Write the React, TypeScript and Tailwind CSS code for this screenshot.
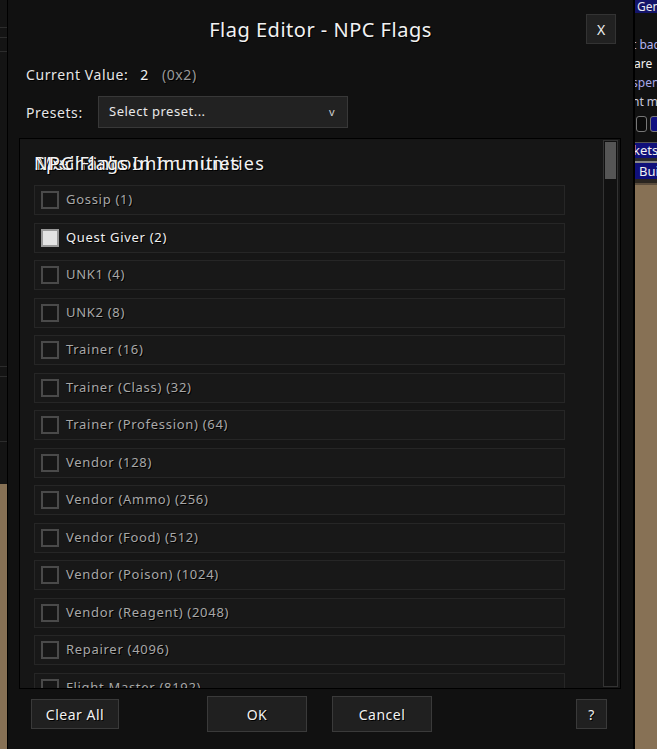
import type { ReactNode } from "react";

const flags = [
  { name: "Gossip", value: 1 },
  { name: "Quest Giver", value: 2 },
  { name: "UNK1", value: 4 },
  { name: "UNK2", value: 8 },
  { name: "Trainer", value: 16 },
  { name: "Trainer (Class)", value: 32 },
  { name: "Trainer (Profession)", value: 64 },
  { name: "Vendor", value: 128 },
  { name: "Vendor (Ammo)", value: 256 },
  { name: "Vendor (Food)", value: 512 },
  { name: "Vendor (Poison)", value: 1024 },
  { name: "Vendor (Reagent)", value: 2048 },
  { name: "Repairer", value: 4096 },
  { name: "Flight Master", value: 8192 },
];

const currentValue = 2;

function FlagRow({ name, value }: { name: string; value: number }) {
  const checked = (currentValue & value) !== 0;
  return (
    <div className="flex h-[30px] shrink-0 items-center gap-[7px] border border-[#262626] bg-[#181818] pl-[6px]">
      <div
        className={
          checked
            ? "h-[18px] w-[18px] border-2 border-[#9a9a9a] bg-[#e4e4e4]"
            : "h-[18px] w-[18px] border-2 border-[#4a4a4a] bg-[#161616]"
        }
      />
      <span
        className={
          checked
            ? "text-[13px] tracking-[0.7px] text-[#f0f0f0] [text-shadow:1px_1px_0_#000]"
            : "text-[13px] tracking-[0.7px] text-[#a8a8a8] [text-shadow:1px_1px_0_#000]"
        }
      >
        {name} ({value})
      </span>
    </div>
  );
}

function Btn({ children, className }: { children: ReactNode; className: string }) {
  return (
    <button
      type="button"
      className={`flex items-center justify-center border border-[#3a3a3a] bg-[#202020] text-[14px] tracking-[0.5px] text-[#f2f2f2] [text-shadow:1px_1px_0_#000] ${className}`}
    >
      {children}
    </button>
  );
}

function LeftStrip() {
  return (
    <div className="flex h-full w-[7px] shrink-0 flex-col bg-[#141414]">
      <div className="h-[27px]" />
      <div className="h-px bg-[#2c2c2c]" />
      <div className="h-[9px]" />
      <div className="h-px bg-[#2c2c2c]" />
      <div className="h-[13px]" />
      <div className="h-px bg-[#2c2c2c]" />
      <div className="h-[314px]" />
      <div className="h-px bg-[#2c2c2c]" />
      <div className="h-[9px]" />
      <div className="h-px bg-[#2c2c2c]" />
      <div className="h-[64px]" />
      <div className="h-px bg-[#2c2c2c]" />
      <div className="h-[42px]" />
      <div className="flex-1 bg-[#877155]" />
    </div>
  );
}

function RightStrip() {
  return (
    <div className="flex h-full w-[24px] shrink-0 flex-col overflow-hidden border-l-2 border-black bg-[#111111] font-['Noto_Sans',sans-serif] text-[12px] leading-none">
      <div className="flex h-[13px] items-center whitespace-nowrap bg-[#14146a] pl-[2px] text-[12px] text-[#e8e8f0]">Gen</div>
      <div className="h-[26px]" />
      <div className="-ml-[3px] flex flex-col gap-[7px] whitespace-nowrap text-[12px]">
        <span className="text-[#b4b4f2]">t back</span>
        <span className="pl-[2px] text-[#f0f0f0]">are</span>
        <span className="text-[#a8a8ea]">spen</span>
        <span className="text-[#c8c8dc]">nt mo</span>
      </div>
      <div className="mt-[8px] flex gap-[3px] pl-[1px]">
        <div className="h-[16px] w-[11px] shrink-0 rounded-[3px] border border-[#777] bg-[#0a0a0a]" />
        <div className="h-[16px] w-[16px] shrink-0 rounded-[3px] border border-[#777] bg-[#101080]" />
      </div>
      <div className="mt-[10px] h-px bg-[#555]" />
      <div className="flex h-[15px] items-center whitespace-nowrap bg-[#10107a] text-[13px] text-[#f0f0f0]">
        <span className="-ml-[2px]">kets</span>
      </div>
      <div className="h-[3px] bg-[#2a2a2a]" />
      <div className="h-[2px] bg-[#888]" />
      <div className="flex h-[16px] items-center whitespace-nowrap bg-[#10107a] pl-[4px] text-[13px] text-[#f0f0f0]">Bui</div>
      <div className="h-[4px] bg-[#2a2520]" />
      <div className="h-[2px] bg-[#5a4c3c]" />
      <div className="flex-1 bg-[#877155]" />
    </div>
  );
}

export default function App() {
  return (
    <div className="flex h-[749px] w-[657px] overflow-hidden bg-[#111111] font-['Noto_Sans','Open_Sans',sans-serif]">
      <LeftStrip />
      <div className="flex h-full w-[626px] shrink-0 flex-col border-l border-black bg-[#111111]">
        <div className="relative flex h-[64px] items-start justify-center pt-[14px]">
          <h1 className="mt-[1px] text-[20px] leading-[30px] tracking-[0.5px] text-[#f2f2f2] [text-shadow:1px_1px_0_#000]">
            Flag Editor - NPC Flags
          </h1>
          <button
            type="button"
            className="absolute right-[17px] top-[14px] flex h-[30px] w-[30px] items-center justify-center border border-[#333] bg-[#212121] text-[14px] text-[#eee]"
          >
            X
          </button>
        </div>

        <div className="flex h-[20px] items-center pl-[18px] text-[14px] tracking-[0.6px] [text-shadow:1px_1px_0_#000]">
          <span className="text-[#e6e6e6]">Current Value:</span>
          <span className="ml-[12px] text-[#f2f2f2]">2</span>
          <span className="ml-[13px] text-[#9a9a9a]">(0x2)</span>
        </div>

        <div className="mt-[12px] flex items-center pl-[18px]">
          <span className="w-[72px] text-[14px] tracking-[0.6px] text-[#e6e6e6] [text-shadow:1px_1px_0_#000]">Presets:</span>
          <div className="flex h-[32px] w-[250px] items-center justify-between border border-[#383838] bg-[#222222] pl-[10px] pr-[12px] text-[13px] tracking-[0.5px] text-[#e8e8e8]">
            <span>Select preset...</span>
            <span className="text-[11px] text-[#cfcfcf]">v</span>
          </div>
        </div>

        <div className="ml-[11px] mt-[10px] flex h-[551px] w-[602px] overflow-hidden border border-black bg-[#161616]">
          <div className="flex flex-1 flex-col pl-[14px] pr-[38px]">
            <div className="relative h-[46px] shrink-0 text-[18px] tracking-[1.2px] text-[#f4f4f4] [text-shadow:1px_1px_0_#000]">
              <span className="absolute left-[1px] top-[11px] whitespace-nowrap">Spell School Immunities</span>
              <span className="absolute left-[2px] top-[11px] whitespace-nowrap">Mechanic Immunities</span>
              <span className="absolute left-0 top-[11px] whitespace-nowrap">NPC Flags</span>
            </div>
            <div className="flex flex-col gap-[7.5px]">
              {flags.map((f) => (
                <FlagRow key={f.value} name={f.name} value={f.value} />
              ))}
            </div>
          </div>
          <div className="mr-[2px] mt-[1px] h-[547px] w-[15px] shrink-0 border border-[#333] bg-[#111111] p-px">
            <div className="h-[37px] bg-[#555555]" />
          </div>
        </div>

        <div className="mt-[6px] flex h-[38px] items-center">
          <Btn className="ml-[23px] h-[30px] w-[88px]">Clear All</Btn>
          <Btn className="ml-[88px] h-[36px] w-[100px]">OK</Btn>
          <Btn className="ml-[25px] h-[36px] w-[100px]">Cancel</Btn>
          <Btn className="ml-auto mr-[26px] h-[30px] w-[31px]">?</Btn>
        </div>
      </div>
      <RightStrip />
    </div>
  );
}
